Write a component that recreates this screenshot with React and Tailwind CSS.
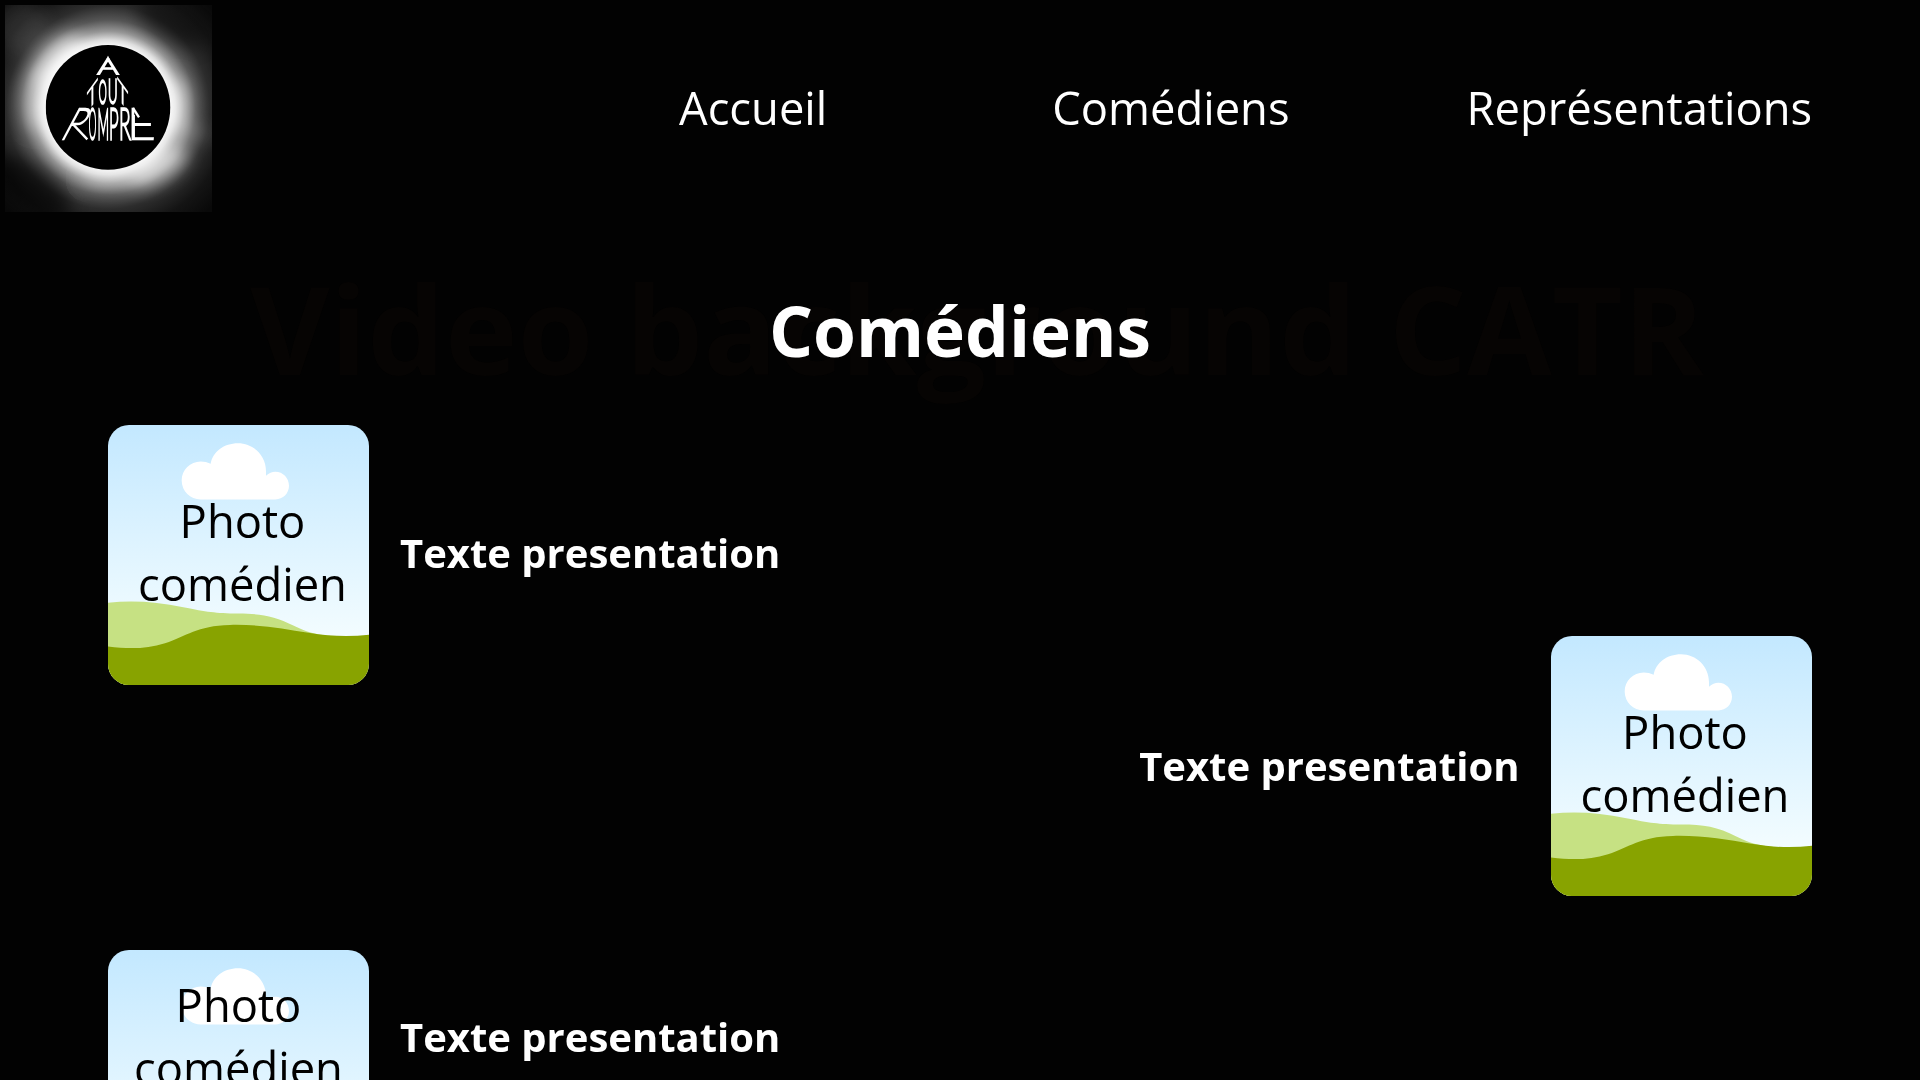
import React from "react";

// One letter of the wordmark, stretched to fill a box (x, y = baseline, w, h).
// `l` and `r` are the ink edges of the letter in em.
function Letter({ ch, x, y, w, h, l, r, skewX = 0, skewY = 0 }) {
  const size = 100;
  const sx = w / ((r - l) * size);
  const sy = h / (0.72 * size);
  return (
    <text
      fontFamily="Lato, sans-serif"
      fontWeight="100"
      fontSize={size}
      fill="#fff"
      stroke="#fff"
      strokeWidth="2.6"
      vectorEffect="non-scaling-stroke"
      transform={`translate(${x} ${y}) skewY(${skewY}) skewX(${skewX}) scale(${sx} ${sy}) translate(${-l * size} 0)`}
    >
      {ch}
    </text>
  );
}

function Logo() {
  return (
    <svg viewBox="15 15 621 621" className="block size-[207px] shrink-0" aria-label="A tout rompre">
      <defs>
        <radialGradient id="corona" gradientUnits="userSpaceOnUse" cx="324" cy="322" r="430">
          <stop offset="0.42" stopColor="#fff" />
          <stop offset="0.47" stopColor="#dedede" />
          <stop offset="0.53" stopColor="#969696" />
          <stop offset="0.61" stopColor="#555" />
          <stop offset="0.71" stopColor="#2c2c2c" />
          <stop offset="0.85" stopColor="#141414" />
          <stop offset="1" stopColor="#090909" />
        </radialGradient>
        <filter id="soft" x="-60%" y="-60%" width="220%" height="220%">
          <feGaussianBlur stdDeviation="26" />
        </filter>
        <clipPath id="bowl">
          <path d="M170 300H290V376H224L205 430H170Z" />
        </clipPath>
        <clipPath id="arms">
          <path d="M385 300H403V345H470V430H385Z" />
        </clipPath>
      </defs>
      <rect x="15" y="15" width="621" height="621" fill="url(#corona)" />
      <g filter="url(#soft)">
        <ellipse cx="175" cy="180" rx="95" ry="52" fill="#fff" opacity="0.6" transform="rotate(-45 175 180)" />
        <ellipse cx="110" cy="300" rx="42" ry="95" fill="#fff" opacity="0.4" />
        <ellipse cx="475" cy="495" rx="95" ry="45" fill="#fff" opacity="0.65" transform="rotate(-30 475 495)" />
        <ellipse cx="532" cy="320" rx="34" ry="90" fill="#fff" opacity="0.5" />
        <ellipse cx="570" cy="400" rx="60" ry="24" fill="#fff" opacity="0.2" />
        <ellipse cx="345" cy="535" rx="100" ry="26" fill="#fff" opacity="0.35" />
        <ellipse cx="60" cy="80" rx="80" ry="80" fill="#fff" opacity="0.1" />
        <ellipse cx="510" cy="75" rx="110" ry="42" fill="#000" opacity="0.45" transform="rotate(30 510 75)" />
        <ellipse cx="90" cy="560" rx="140" ry="60" fill="#000" opacity="0.6" transform="rotate(35 90 560)" />
      </g>
      <circle cx="324" cy="322" r="187" fill="#000" />
      <Letter ch="A" x={295} y={221} w={56} h={48} l={0.02} r={0.6} />
      <Letter ch="T" x={264} y={331} w={27} h={56} l={0.03} r={0.555} skewY={-54} />
      <Letter ch="O" x={298} y={309} w={20} h={70} l={0.065} r={0.725} />
      <Letter ch="U" x={328} y={309} w={20} h={71} l={0.095} r={0.6} />
      <Letter ch="T" x={355} y={292} w={27} h={56} l={0.03} r={0.555} skewY={54} />
      <g clipPath="url(#bowl)">
        <Letter ch="R" x={190} y={417} w={43} h={92} l={0.115} r={0.56} skewX={-28} />
      </g>
      <path d="M220 374L262 418" stroke="#fff" strokeWidth="7" />
      <Letter ch="O" x={268} y={416} w={19} h={90} l={0.065} r={0.725} />
      <Letter ch="M" x={297} y={416} w={26} h={91} l={0.11} r={0.78} />
      <Letter ch="P" x={333} y={416} w={22} h={91} l={0.115} r={0.545} />
      <Letter ch="R" x={364} y={416} w={26} h={91} l={0.115} r={0.56} />
      <g clipPath="url(#arms)">
        <Letter ch="E" x={399} y={416} w={54} h={91} l={0.115} r={0.495} />
      </g>
      <path d="M399 324L417 352" stroke="#fff" strokeWidth="7" />
    </svg>
  );
}

function Landscape() {
  return (
    <svg viewBox="24 28 783 783" preserveAspectRatio="none" className="absolute inset-0 size-full" aria-hidden="true">
      <defs>
        <linearGradient id="sky" x1="0" y1="0" x2="0" y2="1">
          <stop offset="0" stopColor="#c3e8ff" />
          <stop offset="0.8" stopColor="#f2fcff" />
          <stop offset="1" stopColor="#f5fdff" />
        </linearGradient>
      </defs>
      <rect x="24" y="28" width="783" height="783" fill="url(#sky)" />
      <path
        d="M302 252C271 252 245 227 245 195S271 138 302 138Q318 138 332 145C338 109 372 83 414 83C460 83 498 120 498 167V181C507 173 516 169 526 169C549 169 567 188 567 211S549 252 526 252Z"
        fill="#fff"
      />
      <path
        d="M24 563C100 556 170 560 250 577C320 591 345 595 415 596C480 596 525 603 580 632C620 652 650 660 690 663V811H24Z"
        fill="#c6e183"
      />
      <path
        d="M24 695C90 703 140 702 195 685C260 664 290 632 390 630C480 628 550 641 625 654C690 665 750 666 807 660V811H24Z"
        fill="#88a300"
      />
    </svg>
  );
}

function PhotoCard({ textClass }) {
  return (
    <div className="relative h-[260px] w-[261px] shrink-0 overflow-hidden rounded-[21px]">
      <Landscape />
      <p className={`relative text-center text-[45.33px] leading-[63px] text-black ${textClass}`}>
        Photo
        <br />
        comédien
      </p>
    </div>
  );
}

function Presentation({ className }) {
  return <p className={`text-[40px] leading-[56px] font-bold whitespace-nowrap ${className}`}>Texte presentation</p>;
}

export default function App() {
  return (
    <div className='h-[1080px] w-[1920px] overflow-hidden bg-[#020202] font-["Open_Sans",sans-serif] text-white'>
      <header className="flex h-[212px] pt-[5px] pl-[5px]">
        <Logo />
        <nav className="flex pt-[71px] text-[45.33px] leading-[63px] whitespace-nowrap">
          <a className="ml-[467px]">Accueil</a>
          <a className="ml-[225px]">Comédiens</a>
          <a className="ml-[177px]">Représentations</a>
        </nav>
      </header>

      <section className="relative h-[213px]">
        <div className="absolute top-[32px] left-[250px] text-[122.8px] leading-[168px] font-bold whitespace-nowrap text-[#060403]">
          Video background CATR
        </div>
        <h1 className="relative pt-[70px] text-center text-[69.33px] leading-[97px] font-bold">Comédiens</h1>
      </section>

      <main className="flex flex-col px-[108px]">
        <article className="flex">
          <PhotoCard textClass="pt-[64px] pl-[8px]" />
          <Presentation className="mt-[100px] ml-[31px]" />
        </article>
        <article className="-mt-[49px] flex justify-end">
          <Presentation className="mt-[102px] mr-[31.5px]" />
          <PhotoCard textClass="pt-[64px] pl-[7px]" />
        </article>
        <article className="mt-[54px] flex">
          <PhotoCard textClass="pt-[23px]" />
          <Presentation className="mt-[59px] ml-[31px]" />
        </article>
      </main>
    </div>
  );
}
